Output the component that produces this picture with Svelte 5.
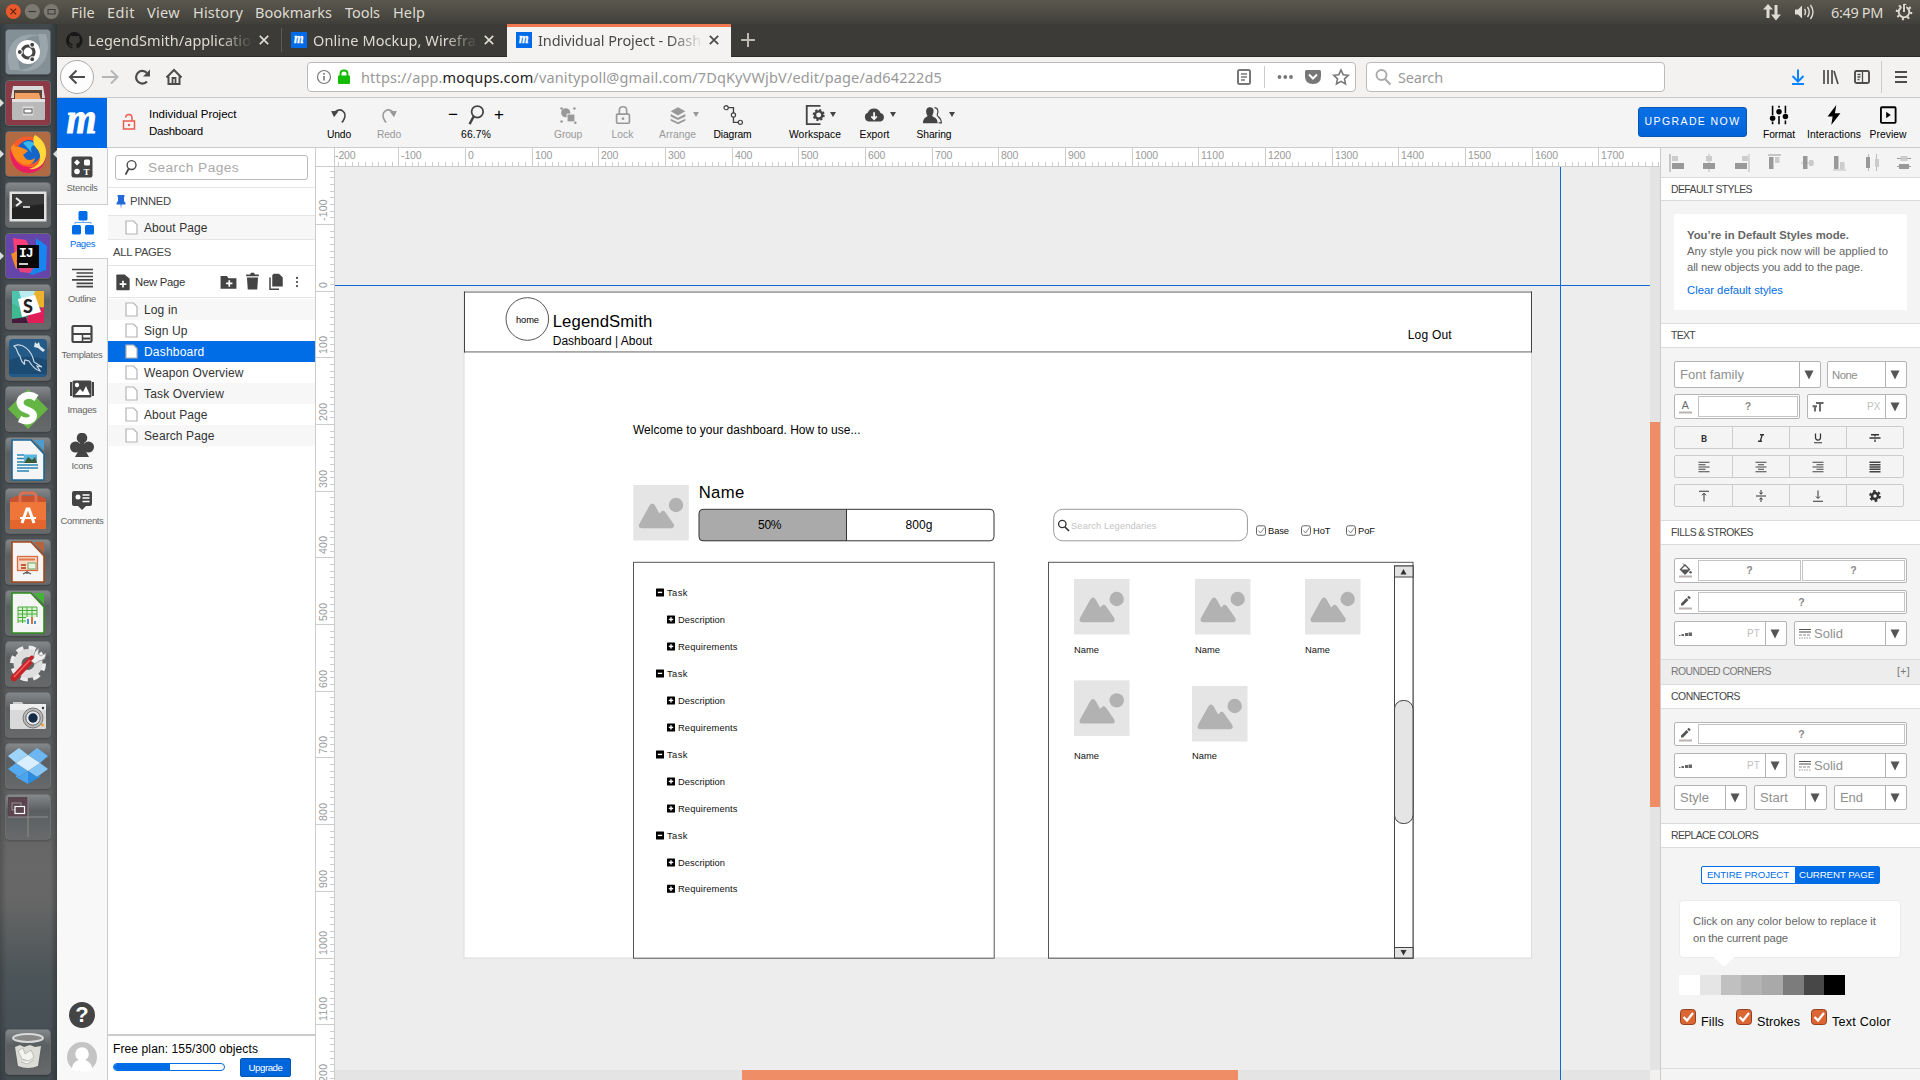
<script>
  // Spreads letters so a label takes exactly the given width.
  function fit(node, width) {
    requestAnimationFrame(() => {
      const range = document.createRange();
      range.selectNodeContents(node);
      const natural = range.getBoundingClientRect().width;
      node.style.letterSpacing = (width - natural) / node.textContent.length + 'px';
    });
  }

  const tile = {
    dash: '<rect width="44" height="44" rx="3" fill="#839096"/><path d="M4 40C-4 14 14 0 34 6C18 4 8 18 14 40zM40 4C48 30 30 46 12 40C30 40 38 26 32 4z" fill="#a9b4b9" opacity=".6"/><circle cx="22" cy="22" r="12" fill="#fff"/><circle cx="22" cy="22" r="6" fill="none" stroke="#444" stroke-width="3.2"/><g fill="#444" stroke="#fff" stroke-width="1.1"><circle cx="13.8" cy="22" r="2.5"/><circle cx="26.2" cy="14.8" r="2.5"/><circle cx="26.2" cy="29.2" r="2.5"/></g>',
    files: '<rect width="44" height="44" rx="3" fill="#8c3a46"/><path d="M7 5h30l2 12H5z" fill="#d9d9d9"/><path d="M8 9h28v9H8z" fill="#5c4438"/><path d="M9 12h24l2 7H9z" fill="#f0a060"/><rect x="6" y="18" width="33" height="21" rx="1.500" fill="#b9b9b9"/><path d="M6 18h33v3H6z" fill="#e2e2e2"/><rect x="16.500" y="25.500" width="11" height="9" rx="1" fill="#ddd"/><rect x="18" y="28" width="8" height="4" fill="#fff" stroke="#555"/>',
    firefox: '<rect width="44" height="44" rx="3" fill="#b06b45"/><circle cx="22" cy="22.500" r="18" fill="#ff5a2a"/><path d="M5 15C2 28 9 41 23 41c10 0 17-8 17-18C38 33 30 36 22 35 12 34 7 27 5 15z" fill="#e81e63"/><circle cx="23" cy="20" r="12" fill="#1565c8"/><path d="M17 11c5-3 10-2 13 2-5 0-6 3-4 8z" fill="#39b8f0"/><path d="M29 3c8 4 12 12 11 20-1 10-9 15-17 14 8-2 12-7 11-14-1-5-4-7-6-10-1-4-1-8 1-10z" fill="#ffd83a"/><path d="M5 15l3-3 1 3c5-1 6 1 10 2l3 2-5 4 3 4c3 2 6 1 9-1-1 6-8 9-14 5C9 28 5 22 5 15z" fill="#ff8b1f"/>',
    term: '<rect x="3.500" y="8.500" width="37" height="30" fill="#e0e0e0"/><rect x="6" y="11" width="32" height="25" fill="#222"/><path d="M6 11h32v10L6 25z" fill="#383838"/><path d="M10 15l5 4-5 4" fill="none" stroke="#eee" stroke-width="2"/><path d="M17 24h7" stroke="#eee" stroke-width="1.600"/>',
    idea: '<rect width="44" height="44" rx="3" fill="#6645aa"/><path d="M7 4l13 2 4 8-7 16-7 4z" fill="#fb3e78"/><path d="M5 20l8-4 4 14-7 5z" fill="#f58b28"/><path d="M30 4l11 8-1 24-14 5-10-7 14-8z" fill="#1784ef"/><path d="M10 26l4 12 10 1 6-8z" fill="#e8427c"/><rect x="11" y="11" width="22" height="23" fill="#080808"/><text x="13" y="23" font-family="Liberation Mono" font-weight="700" font-size="13" letter-spacing="-1" fill="#fff">IJ</text><path d="M13 30h9" stroke="#fff" stroke-width="1.600"/>',
    slack: '<g><path d="M6 6h17l-8 16-9 4z" fill="#4fc4ad"/><path d="M22 6h16v17l-12-3z" fill="#ecb22e"/><path d="M38 22v16H20l3-10z" fill="#e01e5a"/><path d="M6 18l13 8 3 12H6z" fill="#3eb991"/><path d="M6 34l14-2 2 6H6z" fill="#471a3c"/><path d="M13 6h16l-3 9-10 2z" fill="#b8ebf2"/></g><path d="M12 14l17-4 6 17-19 5z" fill="#fff"/><text x="17" y="28" font-family="Lato" font-weight="900" font-size="18" fill="#222">S</text>',
    sql: '<rect x="3" y="3" width="38" height="38" rx="4" fill="#235a87"/><path d="M3 24Q22 17 41 24V38H3z" fill="#153f65" opacity=".6"/><path d="M8 10c9-4 18 5 20 16l8 5-5-1 3 5c-5-1-8-5-11-10l-4-1c-2 2 1 5-1 4-3-2-3-5-4-8-3-2-2-7-6-10z" fill="none" stroke="#c9d8e2" stroke-width="1.200"/><path d="M29 6l2 2 2-2 1 4 5 4-2 2-5-4-4-1z" fill="#dce7ee"/>',
    semp: '<path d="M22 2l20 20-20 20L2 22z" fill="#65b545"/><path d="M30.500 11Q24 6.500 18 9.500C11 13.500 14 20.500 20 22.500C27 25 29.500 28 26 32Q21 36 13.500 32" fill="none" stroke="#fff" stroke-width="7"/>',
    writer: '<path d="M6 2h19l13 14v26H6z" fill="#f5f5f5" stroke="#1c6796" stroke-width="1.600"/><path d="M28 2h10v11z" fill="#4a9dce"/><g stroke="#2685b8" stroke-width="1.500"><path d="M11 17h7M11 20.500h7M11 24h7M11 27h21M11 30h21M11 33h12"/></g><rect x="18" y="16.500" width="13" height="8.500" fill="#5bb6de"/><path d="M18 25l4-6 4 3 3-3 2 6z" fill="#3b5a36"/>',
    store: '<path d="M4 10l6-3h24l6 3v5H4z" fill="#c9532e"/><path d="M14 13V8q0-4 4-4h8q4 0 4 4v5" fill="none" stroke="#dd7050" stroke-width="3"/><path d="M4 13h36v27H4z" fill="#ef7638"/><path d="M4 31h36v9H4z" fill="#e4662e"/><g stroke="#fff" fill="none"><path d="M16 34l5-14h2l5 14" stroke-width="3"/><path d="M14 29h16" stroke-width="2"/></g>',
    impress: '<path d="M6 2h19l13 14v26H6z" fill="#f5f5f5" stroke="#a24a1c" stroke-width="1.600"/><path d="M28 2h10v11z" fill="#b8643a"/><rect x="11.500" y="16.500" width="20" height="14" fill="#f7d8c4" stroke="#dc6c41" stroke-width="1.300"/><path d="M13 19.500h16" stroke="#e0784c" stroke-width="2"/><path d="M15 25h5M15 28h5" stroke="#c65d38" stroke-width="2"/><rect x="22" y="23" width="8" height="6" fill="#e6f4e1" stroke="#72a368"/><path d="M21 31v3M17 34l4-2 4 2" stroke="#555" stroke-width="1.300" fill="none"/>',
    calc: '<path d="M6 2h19l13 14v26H6z" fill="#f5f5f5" stroke="#2d8a1d" stroke-width="1.600"/><path d="M28 2h10v11z" fill="#43b535"/><rect x="12" y="16" width="19" height="16" fill="#d9f2d1"/><path d="M12 16h19M12 19.500h19M12 23h19M12 26.500h19M12 30h19M12 16v16M16.500 16v16M21 16v16M26 16v16M31 16v16" stroke="#4bae3c"/><path d="M20 26h12v8H20z" fill="#f8f8f8"/><path d="M21 28h2v5h-2zM28 30h2v3h-2z" fill="#4593d3"/><path d="M25 26h2v7h-2z" fill="#dc7138"/>',
    tools: '<circle cx="22" cy="21.500" r="15.500" fill="none" stroke="#ececec" stroke-width="5" stroke-dasharray="7 5.200"/><circle cx="22" cy="21.500" r="10.500" fill="none" stroke="#dedede" stroke-width="8"/><path d="M8 36L26 17" stroke="#c82227" stroke-width="6.500" stroke-linecap="round"/><path d="M8 35L24 18" stroke="#ee6663" stroke-width="1.500"/><path d="M25 19l3-3q-1-6 5-10l-1 6 3 2 5-3q0 7-7 8l-4 3z" fill="#eee" stroke="#888" stroke-width=".7"/>',
    camera: '<path d="M7 12V9h9l2 3" fill="#ccc"/><rect x="4" y="11" width="36" height="25" rx="1.500" fill="#d9d9d9"/><path d="M4 11h36v6H4z" fill="#eee"/><circle cx="27" cy="25" r="10" fill="#bbb" stroke="#777"/><circle cx="27" cy="25" r="7.200" fill="#e9e9e9" stroke="#666"/><circle cx="27" cy="25" r="4.700" fill="#142a48"/><circle cx="36.500" cy="32" r="1.500" fill="#f3a22d"/><circle cx="37" cy="15" r="1.200" fill="#333"/>',
    dropbox: '<path d="M13 4l9 7-12 8-8-7z" fill="#9fd4fa"/><path d="M31 4l-9 7 12 8 8-7z" fill="#6cb7f2"/><path d="M10 19l12 8-9 6-11-8z" fill="#55abf0"/><path d="M34 19l-12 8 9 6 11-8z" fill="#86c6f7"/><path d="M22 11l12 8-12 8-12-8z" fill="#d9effd"/><path d="M10 31l3 2 9-6v13l-12-7z" fill="#4ba5ee"/><path d="M34 31l-3 2-9-6v13l12-7z" fill="#2b8ce0"/>',
    spaces: '<rect x="2" y="2" width="20" height="20" fill="#5a444e"/><path d="M22 2v40M2 22h40" stroke="#8d8d8d"/><rect x="6" y="8" width="9" height="7" fill="none" stroke="#9a8d93"/><rect x="9" y="11.500" width="9.500" height="7" fill="#5a444e" stroke="#fff" stroke-width="1.200"/>',
    trash: '<path d="M6 8h33l-5 30H11z" fill="#5b6262" opacity=".8"/><ellipse cx="22" cy="8" rx="15" ry="4" fill="#888" stroke="#d8d8d8" stroke-width="2"/><path d="M9 17l5-2 4 2 6-2 5 2 6-1-3 20q-10 4-20 0z" fill="#dcdcd6"/><path d="M12 21l5-3 2 6 6-4 3 7-5 4-7-2zM15 32l6 2 7-4" fill="#f3f3ef" stroke="#aaa" stroke-width=".7"/>'
  };

  const launcher = [
    ['dash', 0], ['files', 1], ['firefox', 2], ['term', 0], ['idea', 1], ['slack', 0], ['sql', 0], ['semp', 0],
    ['writer', 0], ['store', 0], ['impress', 0], ['calc', 0], ['tools', 0], ['camera', 0], ['dropbox', 0], ['spaces', 0]
  ];

  const menus = [['File', 71, 24], ['Edit', 107, 28], ['View', 147, 33], ['History', 193, 50], ['Bookmarks', 255, 77], ['Tools', 345, 35], ['Help', 393, 32]];

  // 24x24 glyphs used across the editor
  const glyph = {
    undo: '<path d="M7 9C14 3 21 9 17.500 16.500Q16.500 19 15 20" fill="none" stroke="#444" stroke-width="1.700"/><path d="M3.500 7.500l8 .5-5 6.500z" fill="#444"/>',
    redo: '<path d="M17 9C10 3 3 9 6.500 16.500Q7.500 19 9 20" fill="none" stroke="#999" stroke-width="1.700"/><path d="M20.500 7.500l-8 .5 5 6.500z" fill="#999"/>',
    lens: '<circle cx="13.500" cy="8.500" r="6.300" fill="none" stroke="#444" stroke-width="1.900"/><path d="M9.500 13.500L5 22" stroke="#444" stroke-width="2.600"/>',
    group: '<circle cx="9.500" cy="9.500" r="5" fill="#999"/><rect x="11" y="11" width="8.500" height="8.500" fill="#999" stroke="#f4f4f4"/><g fill="#999"><circle cx="5" cy="5" r="1.400"/><circle cx="19" cy="5" r="1.400"/><circle cx="5" cy="19" r="1.400"/><circle cx="20" cy="20.500" r="1.400"/></g>',
    lock: '<rect x="5" y="11" width="14" height="10" rx="1" fill="none" stroke="#999" stroke-width="1.800"/><path d="M8 11V7q0-4 4-4t4 4v4" fill="none" stroke="#999" stroke-width="1.800"/><circle cx="12" cy="16" r="1.500" fill="#999"/>',
    arrange: '<g fill="#999"><path d="M12 3.500l8 4.500-8 4.500L4 8z"/><path d="M4 11l8 4 8-4v2.500l-8 4-8-4z"/><path d="M4 16l8 4 8-4v2.200l-8 4-8-4z"/></g>',
    diagram: '<path d="M6 4h6.500v16H18" fill="none" stroke="#444" stroke-width="1.500"/><g fill="#f4f4f4" stroke="#444" stroke-width="1.300"><circle cx="4.500" cy="4" r="2.300"/><circle cx="12.500" cy="12" r="2.300"/><circle cx="20" cy="20" r="2.300"/></g>',
    workspace: '<path d="M18 2H3v20h15" fill="none" stroke="#444" stroke-width="2"/><circle cx="16" cy="12" r="4" fill="none" stroke="#444" stroke-width="2.600"/><circle cx="16" cy="12" r="5.500" fill="none" stroke="#444" stroke-width="2.200" stroke-dasharray="2.300 2"/>',
    cloud: '<path d="M5 19a5 5 0 0 1-1-9.500A7.500 7.500 0 0 1 18 9.800a4.700 4.700 0 0 1 0 9.200z" fill="#444"/><path d="M11 9v7M8 13.500l3 3 3-3" fill="none" stroke="#f4f4f4" stroke-width="2"/>',
    people: '<path d="M7.500 3.500c3 0 4.500 2 4 5-.3 2-1 3-1.500 4.500 2 1.500 6 2 6 8H0c0-6 3.500-6.500 5-8C4.500 12 3.700 11 3.500 9c-.4-3 1-5.500 4-5.500z" fill="#444"/><path d="M12.500 4c4 0 4.500 4 3 8-.5 2 4.500 2 4.500 8.500h-3" fill="none" stroke="#444" stroke-width="1.300"/>',
    sliders: '<g stroke="#000" stroke-width="1.700"><path d="M5 2v10M5 19v3M12 2v2M12 13v9M19 2v8M19 18v4"/></g><g fill="#000"><circle cx="5" cy="15.500" r="3"/><circle cx="12" cy="8.500" r="3"/><circle cx="19" cy="13.500" r="3"/></g>',
    bolt: '<path d="M14.500 1L5 13.500h5.500L9 23l10-13h-6z" fill="#000"/>',
    preview: '<rect x="4.300" y="3.500" width="16" height="17" rx="1" fill="none" stroke="#000" stroke-width="2"/><path d="M10 8.500l5 3.500-5 3.500z" fill="#000"/>',
    stencils: '<rect x="1.500" y="1.500" width="21" height="21" rx="2" fill="#444"/><g fill="#fff"><path d="M7 4.500L10 7.500 7 10.500 4 7.500z"/><rect x="14" y="4.500" width="6" height="6" rx="1.500"/><circle cx="7" cy="16.500" r="2.800"/><text x="13.500" y="20" font-size="9" font-family="Liberation Serif" font-weight="700">T</text></g>',
    pages: '<g fill="#006de6"><rect x="7.500" y="0" width="9" height="9.500" rx="1.500"/><rect x="1" y="14" width="9" height="9.500" rx="1.500"/><rect x="14" y="14" width="9" height="9.500" rx="1.500"/></g><path d="M12 9v2.500M4 13v-1.500h16V13" stroke="#6ba8ee" fill="none"/>',
    outline: '<path d="M2 3.500h21M6.500 7h16.500M6.500 10.500h16.500M2 13.800h21M6.500 17.300h16.500M6.500 20.700h16.500" stroke="#444" stroke-width="1.700"/>',
    templates: '<rect x="2.500" y="4" width="19" height="16" rx="1" fill="none" stroke="#444" stroke-width="2.200"/><path d="M2 12h20M12 16.500h8" stroke="#444" stroke-width="2.200"/><path d="M12.500 12v8" stroke="#444" stroke-width="1.500"/>',
    images: '<path d="M1 5v14M23 5v14" stroke="#444" stroke-width="2"/><rect x="2.500" y="3.500" width="19" height="17" rx="1.500" fill="#444"/><circle cx="7" cy="8" r="2.200" fill="#fff"/><path d="M5 18l5-6 3 3 3-6 4 9z" fill="#fff"/>',
    club: '<g fill="#444"><circle cx="12" cy="5" r="5.300"/><circle cx="5.500" cy="14" r="5.500"/><circle cx="18.500" cy="14" r="5.500"/><path d="M10 9h4v6l5 9H5l5-9z"/></g>',
    comments: '<path d="M4 3h16q2 0 2 2v11q0 2-2 2h-4l-4 4-4-4H4q-2 0-2-2V5q0-2 2-2z" fill="#444"/><circle cx="8" cy="9" r="2.500" fill="#fff"/><path d="M12.500 7h7M12.500 10h7M12.500 13.500h7" stroke="#fff" stroke-width="1.300"/>',
    newpage: '<path d="M5 3h9l6 5v13q0 1-1 1H5q-1 0-1-1V4q0-1 1-1z" fill="#444"/><path d="M12 10.500v8M8 14.500h8" stroke="#fff" stroke-width="2"/>',
    folder: '<path d="M2 5h8l2 3h10v13H2z" fill="#444"/><path d="M13 10.500v8M9 14.500h8" stroke="#fff" stroke-width="2.200"/>',
    bin: '<path d="M4 3h5l1-2h4l1 2h5v2.500H4zM5 7h14l-1 15H6z" fill="#444"/>',
    copy: '<path d="M9 1h7l5 5v12H7V3z" fill="#444"/><path d="M4 6v15.500h12" fill="none" stroke="#444" stroke-width="2"/>',
    dots: '<g fill="#444"><circle cx="12" cy="5" r="1.900"/><circle cx="12" cy="12" r="1.900"/><circle cx="12" cy="19" r="1.900"/></g>',
    bold: '<text x="6" y="19" font-size="19" font-weight="700" font-family="Roboto" fill="#333">B</text>',
    italic: '<path d="M10 5.500h8M6 18.500h8M14.500 5.500l-4 13" stroke="#333" stroke-width="2.600"/>',
    under: '<path d="M7 3v8q0 5 5 5t5-5V3" fill="none" stroke="#333" stroke-width="2.500"/><path d="M4 21.500h16" stroke="#333" stroke-width="2"/>',
    strike: '<path d="M4 5.500h16M1 12h22M12 5v4M12 15v5" stroke="#333" stroke-width="2.600"/>',
    left: '<path d="M1 2.500h22M1 7.500h14M1 12h22M1 16.500h14M1 21.500h22" stroke="#444" stroke-width="2.200"/>',
    center: '<path d="M1 2.500h22M6 7.500h12M1 12h22M6 16.500h12M1 21.500h22" stroke="#444" stroke-width="2.200"/>',
    right: '<path d="M1 2.500h22M9 7.500h14M1 12h22M9 16.500h14M1 21.500h22" stroke="#444" stroke-width="2.200"/>',
    justify: '<path d="M1 2.500h22M1 7.500h22M1 12h22M1 16.500h22M1 21.500h22" stroke="#444" stroke-width="2.800"/>',
    top: '<path d="M2 2.500h20M12 7v16M8 10.500l4-4 4 4" fill="none" stroke="#333" stroke-width="2"/>',
    middle: '<path d="M2 12h20M12 -1v8M12 25v-8M9 5l3 3.500L15 5M9 19l3-3.500 3 3.500" fill="none" stroke="#333" stroke-width="2"/>',
    bottom: '<path d="M2 22.500h20M12 1v15M8 13l4 4 4-4" fill="none" stroke="#333" stroke-width="2"/>',
    gear: '<circle cx="12" cy="12" r="6" fill="none" stroke="#333" stroke-width="5"/><circle cx="12" cy="12" r="9.800" fill="none" stroke="#333" stroke-width="4" stroke-dasharray="5.400 4.860"/>'
  };

  const tools = [
    ['undo', 'Undo', 50, 24, 0], ['redo', 'Redo', 50, 24, 0, true], ['lens', '66.7%', 74, 30, 25],
    ['group', 'Group', 54, 28, 28, true], ['lock', 'Lock', 55, 22, 0, true], ['arrange', 'Arrange', 55, 37, 0, true],
    ['diagram', 'Diagram', 55, 38, 0], ['workspace', 'Workspace', 60, 52, 25], ['cloud', 'Export', 59, 30, 0], ['people', 'Sharing', 60, 35, 0]
  ];
  const carets = ['arrange', 'workspace', 'cloud', 'people'];
  const rightTools = [['sliders', 'Format', 54, 32], ['bolt', 'Interactions', 56, 54], ['preview', 'Preview', 52, 37]];

  const rail = [
    ['stencils', 'Stencils', 31], ['pages', 'Pages', 25], ['outline', 'Outline', 28], ['templates', 'Templates', 41],
    ['images', 'Images', 29], ['club', 'Icons', 21], ['comments', 'Comments', 43]
  ];
  const pages = [['Log in', 33.5], ['Sign Up', 43.5], ['Dashboard', 60.5], ['Weapon Overview', 99.5], ['Task Overview', 80], ['About Page', 63.5], ['Search Page', 70.5]];

  const unit = 66.67;
  const hTicks = Array.from({ length: 20 }, (_, i) => i - 2);
  const vTicks = Array.from({ length: 14 }, (_, i) => i - 1);
  const minor = (n) => Array.from({ length: n }, (_, i) => i);

  const tree = Array.from({ length: 12 }, (_, i) => ({
    y: 592.4 + i * 27 - (i === 11 ? 0.7 : 0),
    label: ['Task', 'Description', 'Requirements'][i % 3],
    width: [20.5, 47, 59.5][i % 3],
    root: i % 3 === 0
  }));
  const pictures = [[633.3, 485], [1074, 579], [1195, 579], [1305, 579], [1074, 680.4], [1192, 686]];
  const names = [[1074, 652.7], [1195, 652.7], [1305, 652.7], [1074, 758.8], [1192, 758.8]];
  const checks = [[1256, 'Base', 21], [1301, 'HoT', 17.5], [1346, 'PoF', 17]];

  const aligners = [
    '<path d="M1 2v18" stroke="#999"/><rect x="3" y="4" width="6" height="5" fill="#ccc"/><rect x="3" y="11" width="12" height="6" fill="#999"/>',
    '<path d="M8 2v18" stroke="#bbb"/><rect x="5" y="4" width="6" height="5" fill="#ccc"/><rect x="2" y="11" width="12" height="6" fill="#999"/>',
    '<path d="M15 2v18" stroke="#bbb"/><rect x="8" y="4" width="6" height="5" fill="#ccc"/><rect x="1" y="11" width="12" height="6" fill="#999"/>',
    '<path d="M2 3h13" stroke="#999"/><rect x="3" y="5" width="4.500" height="12" fill="#999"/><rect x="9" y="5" width="4.500" height="6" fill="#ccc"/>',
    '<path d="M2 11h13" stroke="#bbb"/><rect x="4" y="4" width="4.500" height="13" fill="#999"/><rect x="10" y="8" width="4.500" height="6" fill="#ccc"/>',
    '<path d="M2 18h13" stroke="#bbb"/><rect x="3" y="4" width="4.500" height="13" fill="#999"/><rect x="9" y="10" width="4.500" height="7" fill="#ccc"/>',
    '<path d="M4.500 2v17M12.500 2v17" stroke="#bbb"/><rect x="2" y="5" width="4" height="11" fill="#999"/><rect x="11" y="7" width="4" height="8" fill="#ccc"/>',
    '<path d="M1 6.500h14M1 14.500h14" stroke="#999"/><rect x="4.500" y="4" width="7" height="5" fill="#ccc"/><rect x="3" y="12" width="10" height="5" fill="#999"/>'
  ];
  const formatRows = [['bold', 'italic', 'under', 'strike'], ['left', 'center', 'right', 'justify'], ['top', 'middle', 'bottom', 'gear']];
  const swatches = ['#fff', '#e5e5e5', '#c0c0c0', '#b3b3b3', '#a9a9a9', '#7c7c7c', '#474747', '#000'];
</script>

{#snippet icon(name, size)}
  <svg class="icon" viewBox="0 0 24 24" width={size} height={size}>{@html glyph[name]}</svg>
{/snippet}

{#snippet logo(size)}
  <svg width={size} height={size} viewBox="0 0 50 50">
    <rect width="50" height="50" fill="#006be8" />
    <text x="9.5" y="34.500" font-family="Liberation Serif" font-size="44" font-weight="700" font-style="italic" fill="#fff" stroke="#fff" stroke-width="1" textLength="30" lengthAdjust="spacingAndGlyphs">m</text>
  </svg>
{/snippet}

{#snippet close()}
  <svg class="close" width="10" height="10" viewBox="0 0 10 10"><path d="M.8.8l8.400 8.400M9.200.8L.8 9.200" stroke="currentColor" stroke-width="1.700" /></svg>
{/snippet}

{#snippet arrow()}
  <span class="arrow"><svg width="10" height="10" viewBox="0 0 10 10"><path d="M.5.5h9L5 9.500z" fill="#555" /></svg></span>
{/snippet}

{#snippet pencil()}
  <svg class="tag" width="15" height="15" viewBox="0 0 15 15"><path d="M3 8.500l5.500-5.500 2 2-5.500 5.500H3zM9.200 2.300L10.800.7l2 2-1.600 1.600z" fill="#555" /><path d="M1 13.500h13" stroke="#b9b3b1" stroke-width="2" /></svg>
{/snippet}

{#snippet lineRow()}
  <div class="row">
    <div class="box w113">
      <svg class="tag" width="15" height="15" viewBox="0 0 15 15"><path d="M1 10h1.500V9H1zM3.500 10H6V8H3.500zM7 10h3V7H7zM10.500 10H14V6.500h-3.500z" fill="#666" /></svg>
      <span class="unit">PT</span>{@render arrow()}
    </div>
    <div class="box w113">
      <svg class="tag" width="14" height="15" viewBox="0 0 14 15"><path d="M1 3.500h12" stroke="#555" /><path d="M1 6h12" stroke="#888" stroke-width="1.500" /><path d="M1 9h12" stroke="#888" stroke-dasharray="3 1" /><path d="M1 12h12" stroke="#999" stroke-dasharray="1.500 1" /></svg>
      <span class="big solid" use:fit={29}>Solid</span>{@render arrow()}
    </div>
  </div>
{/snippet}

{#snippet pageIcon()}
  <svg class="sheet" width="13" height="15" viewBox="0 0 13 15"><path d="M1 1h7.500L12 4.500V14H1z" fill="#fff" stroke="#b4b4b4" stroke-width="1.200" /></svg>
{/snippet}

<div class="screen">
  <header class="menubar">
    <svg class="winbtns" width="71" height="24" viewBox="0 0 71 24">
      <circle cx="13.300" cy="11.500" r="7.500" fill="#e9592b" /><path d="M10.500 8.700l5.600 5.600M16.100 8.700l-5.600 5.600" stroke="#5a2515" stroke-width="1.200" />
      <circle cx="32.300" cy="11.500" r="7.500" fill="#7b7970" /><path d="M28.500 11.500h7.500" stroke="#3c3b37" stroke-width="1.200" />
      <circle cx="51.300" cy="11.500" r="7.500" fill="#7b7970" /><rect x="48" y="9.500" width="7" height="4.500" fill="none" stroke="#3c3b37" />
    </svg>
    {#each menus as [label, x, w], i}
      <span class="menu" style:width="{(menus[i + 1]?.[1] ?? 440) - x}px"><span use:fit={w}>{label}</span></span>
    {/each}
    <svg class="tray" width="56" height="24" viewBox="0 0 56 24">
      <path d="M8 18V8M16 5v11" stroke="#dfdbd2" stroke-width="3" /><path d="M3 9.500L8 4l5 5.500zM11 14.500l5 6 5-6z" fill="#dfdbd2" />
      <path d="M35 9.500h3l4-4v13l-4-4h-3z" fill="#dfdbd2" /><path d="M44.500 9q2 3 0 6M47.500 7q3.500 5 0 10M50.500 5q5 7 0 14" fill="none" stroke="#dfdbd2" stroke-width="1.400" />
    </svg>
    <span class="clock" use:fit={52}>6:49 PM</span>
    <svg class="power" width="18" height="18" viewBox="0 0 18 18"><circle cx="9" cy="9" r="5.300" fill="none" stroke="#dfdbd2" stroke-width="1.800" /><circle cx="9" cy="9" r="7.200" fill="none" stroke="#dfdbd2" stroke-width="2.200" stroke-dasharray="2 3.650" /><path d="M9 2v7" stroke="#47463f" stroke-width="4.500" /><path d="M9 1v8" stroke="#dfdbd2" stroke-width="1.900" /></svg>
  </header>

  <div class="desk">
    <aside class="launcher">
      {#each launcher as [name, marks]}
        <div class="tile">
          <svg width="44" height="44" viewBox="0 0 44 44">{@html tile[name]}</svg>
          {#if marks}<i class="run"></i>{/if}
          {#if marks === 2}<i class="focus"></i>{/if}
        </div>
      {/each}
      <div class="tile bin"><svg width="44" height="44" viewBox="0 0 44 44">{@html tile.trash}</svg></div>
    </aside>

    <main class="browser">
      <div class="tabs">
        <div class="tab first">
          <svg width="17" height="17" viewBox="0 0 16 16"><path d="M8 0a8 8 0 0 0-2.500 15.600c.4 0 .5-.2.500-.4v-1.500c-2.200.5-2.700-1-2.700-1-.4-.9-.9-1.200-.9-1.200-.7-.5.1-.5.1-.5.8.1 1.200.8 1.200.8.7 1.300 1.900.9 2.300.7.100-.5.300-.9.500-1.100-1.800-.2-3.600-.9-3.600-4 0-.9.300-1.600.8-2.100-.1-.2-.4-1 .1-2.100 0 0 .7-.2 2.200.8a7.500 7.500 0 0 1 4 0c1.500-1 2.200-.8 2.200-.8.400 1.100.200 1.900.100 2.100.5.600.8 1.300.8 2.100 0 3.100-1.900 3.700-3.600 3.900.3.300.5.800.5 1.500v2.200c0 .2.100.5.600.4A8 8 0 0 0 8 0z" fill="#191717" /></svg>
          <span class="title"><span use:fit={163}>LegendSmith/applicatio</span></span>{@render close()}
        </div>
        <div class="tab second">
          {@render logo(16)}<span class="title"><span use:fit={163}>Online Mockup, Wirefra</span></span>{@render close()}
        </div>
        <div class="tab active">
          {@render logo(16)}<span class="title"><span use:fit={163}>Individual Project - Dash</span></span>{@render close()}
        </div>
        <svg class="plus" width="16" height="16" viewBox="0 0 16 16"><path d="M8 1v14M1 8h14" stroke="#bdbab2" stroke-width="2" /></svg>
      </div>

      <div class="nav">
        <svg width="130" height="40" viewBox="57 57 130 40" fill="none">
          <circle cx="77" cy="77" r="16.500" fill="#fdfdfd" stroke="#aaa" />
          <path d="M85 77H70M76.500 70.500L70 77l6.500 6.500" stroke="#4c4c4c" stroke-width="2" />
          <path d="M102 77h15M111 70.500l6.500 6.500-6.500 6.500" stroke="#b5b5b5" stroke-width="2" />
          <path d="M147 81.500a6.300 6.300 0 1 1 0-8.500" stroke="#4c4c4c" stroke-width="2.200" /><path d="M150 69.500v7h-7z" fill="#4c4c4c" />
          <path d="M166.500 77.500l7.500-7.500 7.500 7.500M168.500 76.500V84h11v-7.500" stroke="#4c4c4c" stroke-width="2" /><path d="M172.500 84v-6h3v6" stroke="#4c4c4c" stroke-width="1.800" />
        </svg>
        <div class="url">
          <svg width="53" height="28" viewBox="308 63 53 28"><circle cx="324" cy="77" r="6.500" fill="none" stroke="#777" stroke-width="1.200" /><path d="M324 76v4.500M324 73v1.700" stroke="#777" stroke-width="1.600" /><path d="M340.500 76v-2.500q0-3 3.500-3t3.500 3V76" fill="none" stroke="#12bc00" stroke-width="1.900" /><rect x="338" y="75.500" width="12" height="8.500" rx="1" fill="#12bc00" /></svg>
          <span class="addr" use:fit={581}>https://app.<b>moqups.com</b>/vanitypoll@gmail.com/7DqKyVWjbV/edit/page/ad64222d5</span>
          <svg class="urlicons" width="121" height="28" viewBox="1234 63 121 28"><rect x="1238" y="70" width="12" height="14" rx="1.500" fill="none" stroke="#777" stroke-width="2" /><path d="M1241 74h6M1241 77h6M1241 80h4" stroke="#777" stroke-width="1.300" /><path d="M1264.500 66v22" stroke="#ccc" /><g fill="#777"><circle cx="1279.500" cy="77" r="1.900" /><circle cx="1285.300" cy="77" r="1.900" /><circle cx="1291" cy="77" r="1.900" /><path d="M1305 71.500q0-1.500 1.500-1.500h13q1.500 0 1.500 1.500V76q0 8-8 8t-8-8z" /></g><path d="M1309 74.500l4 4 4-4" fill="none" stroke="#fff" stroke-width="2" /><path d="M1341 70l2.200 4.700 5 .6-3.700 3.500 1 5.100-4.500-2.500-4.500 2.500 1-5.100-3.700-3.500 5-.6z" fill="none" stroke="#777" stroke-width="1.600" /></svg>
        </div>
        <div class="find">
          <svg width="31" height="28" viewBox="1367 63 31 28"><circle cx="1381.500" cy="75" r="5" fill="none" stroke="#aaa" stroke-width="1.900" /><path d="M1385 79l5.500 5.500" stroke="#aaa" stroke-width="2.200" /></svg>
          <span use:fit={45}>Search</span>
        </div>
        <svg class="navicons" width="140" height="40" viewBox="1780 57 140 40" fill="none">
          <path d="M1798 69.500v11M1792.500 76l5.500 5.500 5.500-5.500M1792 84h12" stroke="#0a84ff" stroke-width="2" />
          <path d="M1824 70v14M1828 70v14M1832 70v14M1834 71l4 13" stroke="#4c4c4c" stroke-width="1.700" />
          <rect x="1855" y="71" width="14" height="12" rx="1.500" stroke="#4c4c4c" stroke-width="1.900" /><path d="M1862.500 71v12M1857.500 74.500h3M1857.500 77h3M1857.500 79.500h2" stroke="#4c4c4c" stroke-width="1.300" />
          <path d="M1881.500 61v32" stroke="#ccc" /><path d="M1895 72h12M1895 77h12M1895 82h12" stroke="#4c4c4c" stroke-width="2" />
        </svg>
      </div>

      <div class="toolbar">
        {@render logo(50)}
        <svg class="unlock" width="14" height="18" viewBox="0 0 14 18"><rect x="1.500" y="8" width="11" height="8" fill="none" stroke="#ee5a4f" stroke-width="1.500" /><path d="M3.500 4.500Q4 1.500 7 1.500T10 5v3" fill="none" stroke="#ee5a4f" stroke-width="1.500" /><circle cx="7" cy="12" r="1.200" fill="#ee5a4f" /></svg>
        <div class="project"><span use:fit={87.5}>Individual Project</span><br /><span use:fit={54}>Dashboard</span></div>
        {#each tools as [name, label, w, tw, gap, dim]}
          <div class="tool" class:dim style:width="{w}px" style:margin-left="{gap}px">
            <div class="pic">
              {#if name === 'lens'}<span class="step">−</span>{/if}
              {@render icon(name, 22)}
              {#if name === 'lens'}<span class="step">+</span>{/if}
              {#if carets.includes(name)}<i class="caret"></i>{/if}
            </div>
            <span use:fit={tw}>{label}</span>
          </div>
        {/each}
        <button class="upnow"><span use:fit={96}>UPGRADE NOW</span></button>
        {#each rightTools as [name, label, w, tw]}
          <div class="tool" style:width="{w}px"><div class="pic">{@render icon(name, 22)}</div><span use:fit={tw}>{label}</span></div>
        {/each}
      </div>

      <div class="work">
        <nav class="rail">
          {#each rail as [name, label, w]}
            <div class="stop" class:on={name === 'pages'}>{@render icon(name, 24)}<span use:fit={w}>{label}</span></div>
          {/each}
          <div class="help">?</div>
          <svg class="avatar" width="30" height="30" viewBox="0 0 30 30"><circle cx="15" cy="15" r="15" fill="#c4c4c4" /><circle cx="15" cy="12" r="6.800" fill="#fff" /><path d="M4.500 28q1-8 7-10h7q6 2 7 10-9 4-21 0z" fill="#fff" /></svg>
        </nav>

        <section class="pages">
          <div class="search">{@render icon('lens', 17)}<span use:fit={91}>Search Pages</span></div>
          <div class="head pinned">
            <svg width="10" height="14" viewBox="0 0 10 14"><path d="M1.500 0h7v1.500L8 2v4l1.500 2v1.500h-4L5 14l-.5-4.500h-4V8L2 6V2l-.5-.5z" fill="#2469d8" /></svg>
            <span use:fit={41}>PINNED</span>
          </div>
          <div class="page pin">{@render pageIcon()}<span use:fit={63.5}>About Page</span></div>
          <div class="head"><span use:fit={58}>ALL PAGES</span></div>
          <div class="new">
            {@render icon('newpage', 20)}<span use:fit={50}>New Page</span>
            <div class="acts">{@render icon('folder', 19)}{@render icon('bin', 19)}{@render icon('copy', 18)}{@render icon('dots', 14)}</div>
          </div>
          {#each pages as [label, w]}
            <div class="page" class:sel={label === 'Dashboard'}>{@render pageIcon()}<span use:fit={w}>{label}</span></div>
          {/each}
          <footer>
            <span use:fit={145}>Free plan: 155/300 objects</span>
            <div class="plan"><div class="meter"><i></i></div><button><span use:fit={34}>Upgrade</span></button></div>
          </footer>
        </section>

        <svg class="canvas" width="1345" height="932" viewBox="315 148 1345 932">
          <rect x="315" y="148" width="1345" height="932" fill="#ededed" />
          <rect x="1650" y="166" width="10" height="904" fill="#e4e4e4" />
          <rect x="334" y="1070" width="1316" height="10" fill="#e4e4e4" />
          <rect x="1650" y="1070" width="10" height="10" fill="#f2f1ef" />
          <rect x="1650" y="422" width="10" height="385" fill="#ef8d67" />
          <rect x="742" y="1070" width="496" height="10" fill="#ef8d67" />

          <rect x="315" y="148" width="1345" height="19" fill="#fff" />
          <rect x="315" y="148" width="20" height="932" fill="#fff" />
          <path d="M315.500 148V1080M334.500 148V1080M315 166.500H1660" stroke="#ccc" />
          <g font-family="Liberation Sans" font-size="10.500" fill="#999">
            {#each hTicks as t}
              {@const x = Math.round(465 + t * unit)}
              {#if t > -2}<path d="M{x + 0.5} 148V166" stroke="#ccc" />{/if}
              {#each minor(10) as m}
                {@const mx = Math.round(465 + (t + m / 10) * unit) + 0.5}
                {#if mx > 335 && mx < 1660}<path d="M{mx} 162v4" stroke="#ccc" />{/if}
              {/each}
              {#if t < 18}<text x={Math.max(x + 3, 335)} y="159" textLength={String(t * 100).length * 5.8 - (t < 0 ? 2.5 : 0)}>{t * 100}</text>{/if}
            {/each}
            {#each vTicks as t}
              {@const y = Math.round(290.8 + t * unit)}
              {#if y < 1080}<path d="M316 {y + 0.5}H334" stroke="#ccc" />{/if}
              {#each minor(10) as m}
                {@const my = Math.round(290.8 + (t - 1 + m / 10) * unit) + 0.5}
                {#if my > 167 && my < 1080}<path d="M330 {my}h4" stroke="#ccc" />{/if}
              {/each}
              <text transform="translate(327 {y - 3}) rotate(-90)" textLength={String(t * 100).length * 6 - (t < 0 ? 2.5 : 0)}>{t * 100}</text>
            {/each}
          </g>

          <rect x="464" y="291.500" width="1067.500" height="666.500" fill="#fff" stroke="#dcdcdc" />
          <path d="M335 285.500H1650M1560.500 167V1080" stroke="#1169d6" />
          <path d="M464 292.200H1532M464 351.900H1532" stroke="#a6a6a6" stroke-width="1.700" />
          <path d="M464.500 291.500V352.500M1531.500 291.500V352.500" stroke="#444" />
          <circle cx="527.300" cy="319" r="21.300" fill="#fff" stroke="#555" />

          <g font-family="Liberation Sans" font-size="12" fill="#000">
            <text x="516" y="322.800" font-size="9.300" textLength="23">home</text>
            <text x="552.700" y="327" font-size="16.700" textLength="99.500">LegendSmith</text>
            <text x="552.700" y="345" textLength="99.500">Dashboard | About</text>
            <text x="1407.700" y="339" textLength="44">Log Out</text>
            <text x="633" y="434" textLength="227.500">Welcome to your dashboard. How to use...</text>
            <text x="698.700" y="498" font-size="16.700" textLength="45.500">Name</text>
          </g>

          {#each pictures as [x, y]}
            <g transform="translate({x} {y})">
              <rect width="55.500" height="55.500" fill="#e5e5e5" />
              <path d="M8 43.200q-3.500-.4-2-4.200L16 21q3-4.800 6 0l4 7.300q.8 0 1.500-1.300 2.500-2.500 4.500.3L40.300 39q1.500 3.800-2 4.200z" fill="#b2b2b2" />
              <circle cx="42.700" cy="20" r="7.200" fill="#b2b2b2" />
            </g>
          {/each}

          <path d="M846.500 509.500H703q-4 0-4 4V537q0 4 4 4H846.500z" fill="#aaa" />
          <rect x="699" y="509.300" width="295" height="31.500" rx="4" fill="none" stroke="#333" />
          <path d="M846.500 509V541" stroke="#333" />
          <g font-family="Liberation Sans" font-size="12" fill="#000">
            <text x="758" y="529" textLength="23.500">50%</text>
            <text x="905.500" y="529" textLength="27">800g</text>
          </g>
          <rect x="633.500" y="562.300" width="360.700" height="395.900" fill="#fff" stroke="#555" />
          <rect x="1048.500" y="562.300" width="364.500" height="395.900" fill="none" stroke="#555" />

          <g font-family="Liberation Sans" font-size="9.330" fill="#111">
            {#each tree as { y, label, width, root }}
              {@const x = root ? 656 : 667}
              <rect {x} y={y - 4} width="8" height="8" rx=".5" fill="#000" />
              <path d="M{x + 1.8} {y}h4.400" stroke="#fff" stroke-width="1.400" />
              {#if !root}<path d="M{x + 4} {y - 2.2}v4.400" stroke="#fff" stroke-width="1.400" />{/if}
              <text x={x + 11} y={y + 3.5} textLength={width}>{label}</text>
            {/each}
            {#each names as [x, y]}<text {x} {y} textLength="25">Name</text>{/each}
            {#each checks as [x, label, w]}
              <rect x={x + 0.5} y="525.800" width="9" height="9.500" rx="2" fill="#fff" stroke="#666" />
              <path d="M{x + 2.5} 530.500l2 2.500 4-5.500" fill="none" stroke="#777" stroke-width=".9" />
              <text x={x + 12} y="534" textLength={w}>{label}</text>
            {/each}
            <rect x="1053.700" y="509.300" width="193.700" height="31.500" rx="9" fill="none" stroke="#999" />
            <circle cx="1062.300" cy="524" r="3.700" fill="none" stroke="#333" stroke-width="1.300" /><path d="M1065 527l4 4" stroke="#333" stroke-width="1.700" />
            <text x="1071" y="529" fill="#c4c4c4" textLength="85.500">Search Legendaries</text>
          </g>

          <g stroke="#444">
            <rect x="1394.500" y="566" width="18.500" height="392" fill="#fff" />
            <rect x="1394.500" y="566" width="18.500" height="11" fill="#e3e3e3" />
            <rect x="1394.500" y="947.500" width="18.500" height="10.500" fill="#e3e3e3" />
            <rect x="1394.500" y="700.500" width="18.500" height="123" rx="8.500" fill="#e5e5e5" />
          </g>
          <path d="M1400.500 574.500l3-5.500 3 5.500zM1400.500 950l3 5.500 3-5.500z" fill="#333" />
        </svg>

        <aside class="props">
          <div class="aligners">{#each aligners as a}<svg width="16" height="20" viewBox="0 0 16 20">{@html a}</svg>{/each}</div>
          <h3><span use:fit={81}>DEFAULT STYLES</span></h3>
          <div class="body intro">
            <div class="card">
              <b use:fit={162}>You’re in Default Styles mode.</b>
              <span use:fit={201}>Any style you pick now will be applied to</span>
              <span use:fit={176}>all new objects you add to the page.</span>
              <span class="link" use:fit={96}>Clear default styles</span>
            </div>
          </div>
          <h3><span use:fit={24}>TEXT</span></h3>
          <div class="body text">
            <div class="row"><div class="box family"><span class="big" use:fit={64}>Font family</span>{@render arrow()}</div><div class="box none"><span use:fit={25}>None</span>{@render arrow()}</div></div>
            <div class="row">
              <div class="box color">
                <svg class="tag" width="15" height="15" viewBox="0 0 15 15"><text x="3.500" y="10" font-size="11.500" font-family="Roboto" fill="#666">A</text><path d="M1 13.500h13" stroke="#b9b3b1" stroke-width="2" /></svg>
                <b class="well">?</b>
              </div>
              <div class="box size"><svg class="tag" width="15" height="15" viewBox="0 0 15 15"><path d="M5 4h7.500M9 4v8.500M1.500 7.300h4.500M4 7v5.500" stroke="#666" stroke-width="1.900" /></svg><span class="unit">PX</span>{@render arrow()}</div>
            </div>
            <div class="segs">
              {#each formatRows as r}<div class="seg">{#each r as g}<div>{@render icon(g, 12)}</div>{/each}</div>{/each}
            </div>
          </div>
          <h3><span use:fit={82}>FILLS &amp; STROKES</span></h3>
          <div class="body fills">
            <div class="box wide"><svg class="tag" width="15" height="15" viewBox="0 0 15 15"><path d="M2.500 6.500L7 2l4.500 4.500L7 11z" fill="none" stroke="#555" stroke-width="1.300" /><path d="M3 7h8L7 11zM5 .5L7.500 3" fill="#555" stroke="#555" /><circle cx="12.500" cy="9.300" r="1.200" fill="#555" /><path d="M1 13.500h13" stroke="#b9b3b1" stroke-width="2" /></svg><b class="well">?</b><b class="well">?</b></div>
            <div class="box wide thin">{@render pencil()}<b class="well">?</b></div>
            {@render lineRow()}
          </div>
          <h3 class="folded"><span use:fit={100}>ROUNDED CORNERS</span><span use:fit={13}>[+]</span></h3>
          <h3><span use:fit={69}>CONNECTORS</span></h3>
          <div class="body conn">
            <div class="box wide thin">{@render pencil()}<b class="well">?</b></div>
            {@render lineRow()}
            <div class="row">
              {#each [['Style', 29], ['Start', 28], ['End', 23]] as [label, w]}<div class="box third"><span class="big" use:fit={w}>{label}</span>{@render arrow()}</div>{/each}
            </div>
          </div>
          <h3><span use:fit={87}>REPLACE COLORS</span></h3>
          <div class="body replace">
            <div class="toggle"><span class="half"><span use:fit={82}>ENTIRE PROJECT</span></span><span class="half cur"><span use:fit={75}>CURRENT PAGE</span></span></div>
            <div class="tip"><span use:fit={183}>Click on any color below to replace it</span><br /><span use:fit={95}>on the current page</span></div>
            <div class="swatches">{#each swatches as c}<i style:background={c}></i>{/each}</div>
            <div class="checks">
              {#each [['Fills', 23, 56], ['Strokes', 43, 75], ['Text Color', 59, 80]] as [label, w, cell]}
                <div style:width="{cell}px"><svg width="16" height="16" viewBox="0 0 16 16"><rect x=".5" y=".5" width="15" height="15" rx="3" fill="#dc6534" stroke="#93401e" /><path d="M3.500 8l3.500 3.500L13 4" fill="none" stroke="#fff" stroke-width="2.300" /></svg><span use:fit={w}>{label}</span></div>
              {/each}
            </div>
          </div>
        </aside>
      </div>
    </main>
  </div>
</div>

<style>
  :global(body) { margin: 0; overflow: hidden; }
  .screen { width: 1920px; height: 1080px; display: flex; flex-direction: column; overflow: hidden; font-family: "Liberation Sans", Arial, sans-serif; white-space: nowrap; }
  .screen :global(svg) { display: block; flex: none; }
  button { font: inherit; border: 0; padding: 0; }

  .menubar { height: 24px; flex: none; display: flex; align-items: center; background: linear-gradient(#5a584e, #403f3a); color: #dfdbd2; font: 14.500px/24px "Noto Sans", sans-serif; }
  .menu { line-height: 22px; }
  .tray { margin-left: auto; margin-right: 15px; }
  .clock { width: 52px; line-height: 22px; margin-right: 12px; }
  .power { margin-right: 7px; }

  .desk { flex: 1; display: flex; min-height: 0; }
  .launcher { width: 57px; box-sizing: border-box; padding: 6px 0 6px 6px; display: flex; flex-direction: column; gap: 7px; background: linear-gradient(90deg, rgba(0,0,0,.18), transparent 12%, transparent 88%, rgba(0,0,0,.25)), linear-gradient(#40484c, #4b5154 45%, #5b5c5d 68%, #686868 80%, #666 83%, #4c5558 90%, #424b50); }
  .tile { position: relative; width: 44px; height: 44px; border-radius: 3px; background: linear-gradient(#84888a, #5b5f61 35%, #67696a); box-shadow: 0 0 0 .5px #8b8f91, 0 1px 3px rgba(0,0,0,.5); }
  .bin { margin-top: auto; }
  .run, .focus { position: absolute; top: 18px; width: 0; height: 0; border: 4px solid transparent; }
  .run { left: -6px; border-left-color: #ddd; border-right: 0; }
  .focus { right: -7px; border-right-color: #ddd; border-left: 0; }

  .browser { flex: 1; min-width: 0; display: flex; flex-direction: column; }
  .tabs { height: 33px; flex: none; display: flex; align-items: center; background: #3c3b37; border-bottom: 1px solid #2b2a27; box-sizing: border-box; color: #dfdbd2; font: 14.500px/32px "Noto Sans", sans-serif; }
  .tab { display: flex; align-items: center; height: 33px; box-sizing: border-box; }
  .first { width: 225px; padding-left: 9px; border-right: 1px solid #5c5b56; height: 24px; }
  .second { width: 225px; padding-left: 9px; }
  .active { width: 224px; padding-left: 9px; background: #f4f3f2; border-top: 3px solid #f0794f; color: #4a4a4a; padding-bottom: 3px; }
  .title { margin-left: 6px; width: 165px; overflow: hidden; mask-image: linear-gradient(90deg, #000 80%, transparent); }
  .close { margin-left: 6px; }
  .first .title { margin-left: 5px; width: 165px; }
  .plus { margin-left: 9px; }

  .nav { height: 40px; flex: none; display: flex; align-items: center; background: #f3f2f1; border-bottom: 1px solid #c9c9c9; font: 14.500px/28px "Noto Sans", sans-serif; color: #999; }
  .url, .find { height: 28px; display: flex; align-items: center; background: #fff; border: 1px solid #bbb; border-radius: 4px; box-sizing: content-box; }
  .url { margin-left: 120px; width: 1047px; }
  .urlicons { margin-left: auto; }
  .addr b { font-weight: 400; color: #222; }
  .find { margin-left: 10px; width: 297px; }
  .navicons { margin-left: auto; }

  .toolbar { height: 50px; flex: none; display: flex; background: #f4f4f4; box-shadow: inset 0 -1px #ccc; font-size: 10.300px; color: #000; }
  .unlock { margin: 15px 13px 0 15px; }
  .project { width: 165px; font-size: 11.500px; line-height: 17px; padding-top: 8px; }
  .tool { text-align: center; line-height: 12px; flex: none; }
  .tool.dim { color: #999; }
  .pic { height: 22px; margin: 6px 0 3px; display: flex; justify-content: center; align-items: center; position: relative; }
  .step { font-size: 17px; width: 24px; }
  .caret { position: absolute; right: calc(50% - 21px); top: 8px; border: 3px solid transparent; border-top: 5px solid #444; border-bottom: 0; }
  .dim .caret { border-top-color: #999; }
  .upnow { margin: 9px 5px 0 auto; width: 109px; height: 30px; border: 1px solid #0656b4; border-radius: 3px; background: linear-gradient(#0a70e4, #0063da); color: #fff; font-size: 10.500px; text-align: center; box-sizing: border-box; padding-bottom: 2px; }
  .toolbar > :last-child { margin-right: 6px; }

  .work { flex: 1; display: flex; min-height: 0; }
  .rail { width: 51px; box-sizing: border-box; background: #f8f8f8; border-right: 1px solid #ccc; display: flex; flex-direction: column; align-items: center; padding-bottom: 8px; }
  .stop { width: 50px; height: 55.500px; box-sizing: border-box; padding-top: 7px; display: flex; flex-direction: column; align-items: center; font-size: 9.500px; line-height: 12px; color: #666; gap: 3px; }
  .stop.on { width: 51px; margin-right: -1px; background: #fff; box-shadow: inset 0 1px #ccc, inset 0 -1px #ccc; color: #006de6; }
  .help { margin-top: auto; width: 26px; height: 26px; border-radius: 50%; background: #444; color: #fff; font: 700 22px/26px "Liberation Sans", sans-serif; text-align: center; }
  .avatar { margin-top: 14px; }

  .pages { width: 207px; background: #fff; display: flex; flex-direction: column; font-size: 12px; color: #333; }
  .search { margin: 7px 7px; height: 23px; border: 1px solid #bbb; border-radius: 3px; display: flex; align-items: center; gap: 9px; padding-left: 6px; font-size: 13.700px; color: #aaa; }
  .search span { margin-top: -1px; }
  .head { height: 27px; box-sizing: border-box; border-top: 1px solid #e5e5e5; border-bottom: 1px solid #e5e5e5; padding-left: 5px; line-height: 25px; font-size: 11.300px; display: flex; align-items: center; gap: 4px; color: #444; }
  .pinned { height: 29px; padding-left: 8px; }
  .page { height: 21px; display: flex; align-items: center; padding-left: 17px; gap: 6px; }
  .pin { height: 23px; background: #f7f7f7; }
  .new ~ .page:nth-child(even) { background: #f7f7f7; }
  .new ~ .page.sel { background: #006de6; color: #fff; }
  .new { height: 32px; border-bottom: 1px solid #e5e5e5; box-sizing: border-box; display: flex; align-items: center; padding-left: 5px; gap: 2px; font-size: 11.300px; }
  .acts { display: flex; align-items: center; gap: 5px; margin-left: auto; padding-right: 11px; }
  .new + .page { margin-top: 1px; }
  footer { margin-top: auto; height: 44px; border-top: 2px solid #ccc; padding-left: 5px; line-height: 26px; color: #000; }
  .plan { display: flex; margin-top: -4px; }
  .meter { width: 110px; height: 6px; border: 1px solid #006de6; border-radius: 4px; margin-top: 5px; overflow: hidden; }
  .meter i { display: block; height: 6px; width: 51%; background: #006de6; }
  .plan button { margin-left: 15px; width: 51px; height: 19px; background: #0066dc; border: 1px solid #0656b4; border-radius: 2px; color: #fff; font-size: 9.700px; line-height: 17px; box-sizing: border-box; }

  .props { flex: 1; box-sizing: border-box; border-left: 1px solid #ccc; background: #f4f4f4; font-size: 11.300px; color: #666; }
  .aligners { height: 29px; display: flex; justify-content: space-between; align-items: center; padding: 0 8px; }
  .aligners :global(svg) { margin-top: -1px; }
  h3 { margin: 0; height: 25px; box-sizing: border-box; background: #fff; border-top: 1px solid #dcdcdc; border-bottom: 1px solid #dcdcdc; padding: 0 10px; font-weight: 400; font-size: 10.400px; line-height: 23px; color: #444; display: flex; justify-content: space-between; }
  .aligners + h3 { height: 24px; line-height: 23px; }
  .folded { background: #ededed; color: #777; border-bottom: 0; height: 25px; line-height: 24px; }
  .body { box-sizing: border-box; padding-left: 13px; display: flex; flex-direction: column; }
  .intro { height: 122px; padding-top: 13px; }
  .card { width: 233px; height: 96px; box-sizing: border-box; padding: 13px; background: #fff; line-height: 16px; display: flex; flex-direction: column; align-items: flex-start; }
  .card .link { margin-top: 7px; color: #006de6; }
  .text { height: 172px; padding-top: 13px; gap: 6px; }
  .row { display: flex; gap: 7px; }
  .box { height: 25px; box-sizing: border-box; border: 1px solid #b4b4b4; border-radius: 2px; background: #fff; display: flex; align-items: center; color: #8c8c8c; }
  .arrow { margin-left: auto; align-self: stretch; width: 21px; border-left: 1px solid #b4b4b4; display: flex; align-items: center; padding-left: 4px; box-sizing: border-box; flex: none; }
  .big { font-size: 13px; padding-left: 5px; color: #8f8f8f; }
  .big.solid { padding-left: 0; margin-left: -2px; }
  .family { width: 147px; }
  .none { width: 80px; margin-left: -1px; padding-left: 4px; box-sizing: border-box; }
  .row:first-child .box { height: 27px; }
  .color { width: 126px; }
  .size { width: 100px; }
  .tag { margin: 0 4px 0 3px; }
  .color .tag, .wide .tag { margin-right: 5px; }
  .unit { margin-left: auto; color: #c0c0c0; font-size: 10px; margin-right: 6px; width: 12px; }
  .unit + .arrow { margin-left: 0; }
  .well { flex: 1; margin: 1px 1px 1px 0; height: 19px; border: 1px solid #c4c4c4; text-align: center; line-height: 19px; font-size: 10.500px; color: #888; }
  .segs { display: grid; gap: 6px; margin-top: 1px; }
  .seg { width: 230px; height: 23px; box-sizing: border-box; border: 1px solid #ccc; border-radius: 2px; display: grid; grid-template-columns: repeat(4, 1fr); }
  .seg div { display: flex; align-items: center; justify-content: center; }
  .seg div + div { border-left: 1px solid #ccc; }
  .fills { height: 114px; padding-top: 13px; gap: 7px; }
  .wide { width: 233px; }
  .thin { height: 24px; }
  .thin .well { height: 18px; line-height: 18px; }
  .w113 { width: 113px; }
  .fills .row .box, .conn .row .box { height: 25px; }
  .conn { height: 114px; padding-top: 13px; gap: 7px; }
  .third { width: 73px; }
  .replace { height: 221px; padding-top: 18px; align-items: flex-start; box-shadow: inset 0 -1px #dcdcdc; }
  .toggle { margin-left: 27px; width: 179px; height: 18px; border: 1px solid #006de6; box-sizing: border-box; border-radius: 2px; display: flex; font-size: 9.700px; line-height: 16px; color: #006de6; background: #fff; }
  .half { width: 93px; padding-left: 5px; box-sizing: border-box; }
  .cur { background: #006de6; color: #fff; flex: 1; padding-left: 4px; }
  .tip { position: relative; margin: 16px 0 0 5px; width: 222px; height: 58px; box-sizing: border-box; padding: 12px 13px; border: 1px solid #ebebeb; border-radius: 4px; background: #fff; line-height: 17px; }
  .tip::after { content: ""; position: absolute; left: 34px; top: 56px; border: 10px solid transparent; border-top-color: #fff; border-bottom: 0; }
  .swatches { display: flex; margin: 17px 0 0 5px; }
  .swatches i { width: 20.750px; height: 20px; }
  .checks { display: flex; margin: 14px 0 0 6px; font-size: 12.600px; color: #000; }
  .checks div { display: flex; gap: 5px; }
  .checks span { padding-top: 5px; line-height: 16px; }
</style>
